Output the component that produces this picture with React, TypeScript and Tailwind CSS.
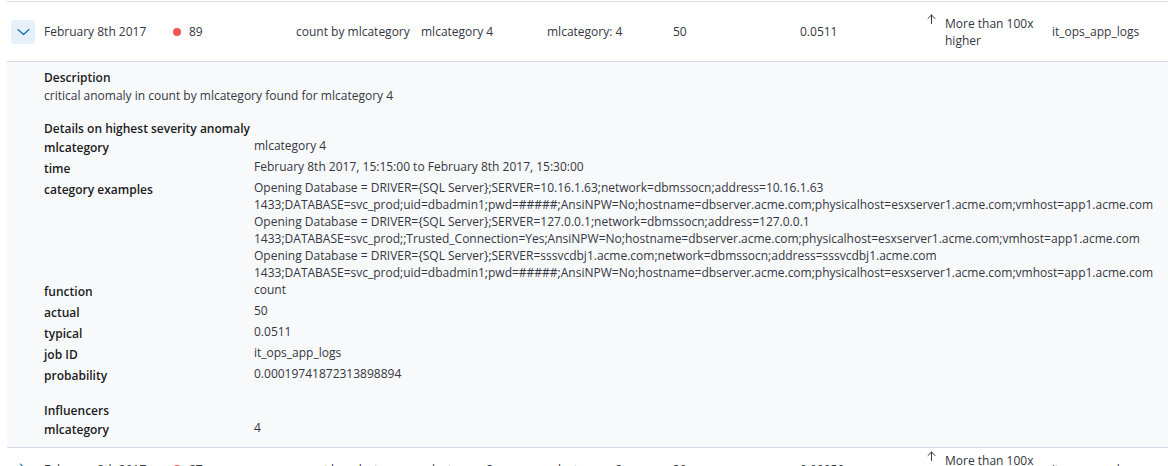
import React from 'react'

const font = { fontFamily: '"Open Sans", "Noto Sans", sans-serif' }

function ChevronDown() {
  return (
    <svg width="13" height="8" viewBox="0 0 13 8" fill="none">
      <path d="M1 1.5L6.5 6.5L12 1.5" stroke="#006bb4" strokeWidth="1.1" strokeLinecap="round" strokeLinejoin="round" />
    </svg>
  )
}

function ChevronRight() {
  return (
    <svg width="8" height="13" viewBox="0 0 8 13" fill="none">
      <path d="M1.5 1L6.5 6.5L1.5 12" stroke="#006bb4" strokeWidth="1.1" strokeLinecap="round" strokeLinejoin="round" />
    </svg>
  )
}

function ArrowUp() {
  return (
    <svg width="9" height="10" viewBox="0 0 9 10" fill="none" className="mt-[-1px]">
      <path d="M4.5 1V9.5M1 4.5L4.5 1L8 4.5" stroke="#343741" strokeWidth="1" strokeLinecap="round" strokeLinejoin="round" />
    </svg>
  )
}

type RowData = {
  date: string
  severity: string
  detector: string
  entity: string
  influenced: string
  actual: string
  typical: string
  job: string
}

const rows: RowData[] = [
  {
    date: 'February 8th 2017',
    severity: '89',
    detector: 'count by mlcategory',
    entity: 'mlcategory 4',
    influenced: 'mlcategory: 4',
    actual: '50',
    typical: '0.0511',
    job: 'it_ops_app_logs',
  },
  {
    date: 'February 8th 2017',
    severity: '87',
    detector: 'count by mlcategory',
    entity: 'mlcategory 2',
    influenced: 'mlcategory: 2',
    actual: '30',
    typical: '0.00959',
    job: 'it_ops_app_logs',
  },
]

function AnomalyRow({ row, expanded }: { row: RowData; expanded: boolean }) {
  return (
    <div
      className={
        'grid grid-cols-[37px_129px_123px_125px_126px_126px_127px_127px_125px_1fr] items-center text-[12px] leading-[17px] text-[#343741] ' +
        (expanded ? 'h-[59px]' : 'py-[4px]')
      }
    >
      <div className="pl-[4px]">
        {expanded ? (
          <div className="w-6 h-6 rounded-[4px] bg-[#e6f0f8] flex items-center justify-center">
            <ChevronDown />
          </div>
        ) : (
          <div className="w-6 h-6 flex items-center justify-center">
            <ChevronRight />
          </div>
        )}
      </div>
      <div>{row.date}</div>
      <div className="flex items-center gap-2">
        <span className="w-2 h-2 rounded-full bg-[#f65252]" />
        <span>{row.severity}</span>
      </div>
      <div>{row.detector}</div>
      <div>{row.entity}</div>
      <div>{row.influenced}</div>
      <div>{row.actual}</div>
      <div>{row.typical}</div>
      <div className="flex items-start gap-[9px]">
        <ArrowUp />
        <div>
          <div>More than 100x</div>
          <div>higher</div>
        </div>
      </div>
      <div>{row.job}</div>
    </div>
  )
}

const examples = [
  'Opening Database = DRIVER={SQL Server};SERVER=10.16.1.63;network=dbmssocn;address=10.16.1.63',
  '1433;DATABASE=svc_prod;uid=dbadmin1;pwd=#####;AnsiNPW=No;hostname=dbserver.acme.com;physicalhost=esxserver1.acme.com;vmhost=app1.acme.com',
  'Opening Database = DRIVER={SQL Server};SERVER=127.0.0.1;network=dbmssocn;address=127.0.0.1',
  '1433;DATABASE=svc_prod;;Trusted_Connection=Yes;AnsiNPW=No;hostname=dbserver.acme.com;physicalhost=esxserver1.acme.com;vmhost=app1.acme.com',
  'Opening Database = DRIVER={SQL Server};SERVER=sssvcdbj1.acme.com;network=dbmssocn;address=sssvcdbj1.acme.com',
  '1433;DATABASE=svc_prod;uid=dbadmin1;pwd=#####;AnsiNPW=No;hostname=dbserver.acme.com;physicalhost=esxserver1.acme.com;vmhost=app1.acme.com',
]

function Detail({ label, children }: { label: string; children: React.ReactNode }) {
  return (
    <div className="grid grid-cols-[210px_1fr] items-start">
      <div className="font-semibold leading-[21px] text-[#1a1c21]">{label}</div>
      <div className="leading-[17px] text-[#343741]">{children}</div>
    </div>
  )
}

export default function App() {
  return (
    <div className="w-[1168px] h-[466px] overflow-hidden bg-white pt-px" style={font}>
      <div className="ml-[7px] border-t border-[#d3dae6]">
        <AnomalyRow row={rows[0]} expanded />
        <div className="border-t border-b border-[#d3dae6] bg-[#f8f9fb] pl-[37px] pt-[7px] pb-[7px] text-[12px]">
          <div className="font-semibold leading-[17px] text-[#1a1c21]">Description</div>
          <div className="leading-[17px] mt-px text-[#343741]">
            critical anomaly in count by mlcategory found for mlcategory 4
          </div>

          <div className="font-semibold leading-[17px] mt-[16px] text-[#1a1c21]">
            Details on highest severity anomaly
          </div>
          <Detail label="mlcategory">mlcategory 4</Detail>
          <Detail label="time">February 8th 2017, 15:15:00 to February 8th 2017, 15:30:00</Detail>
          <Detail label="category examples">
            {examples.map((line, i) => (
              <div key={i} className="whitespace-nowrap">
                {line}
              </div>
            ))}
          </Detail>
          <Detail label="function">count</Detail>
          <Detail label="actual">50</Detail>
          <Detail label="typical">0.0511</Detail>
          <Detail label="job ID">it_ops_app_logs</Detail>
          <Detail label="probability">0.00019741872313898894</Detail>

          <div className="font-semibold leading-[17px] mt-[16px] text-[#1a1c21]">Influencers</div>
          <Detail label="mlcategory">4</Detail>
        </div>
        <AnomalyRow row={rows[1]} expanded={false} />
      </div>
    </div>
  )
}
